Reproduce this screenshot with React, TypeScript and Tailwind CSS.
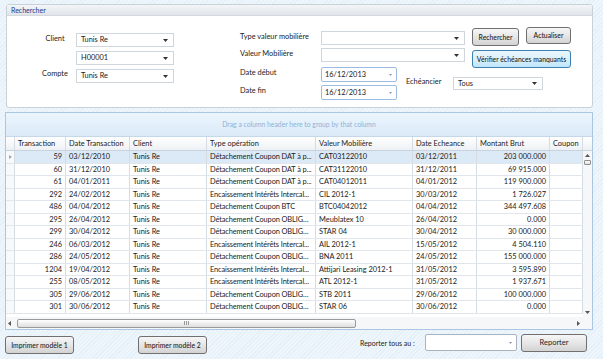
import React from 'react'

const DAT = 'Détachement Coupon DAT à p...'
const ENC = 'Encaissement Intérêts Intercal...'
const OBL = 'Détachement Coupon OBLIGA...'

const rows = [
  ['59', '03/12/2010', DAT, 'CAT03122010', '03/12/2011', '203 000.000'],
  ['60', '31/12/2010', DAT, 'CAT31122010', '31/12/2011', '69 915.000'],
  ['61', '04/01/2011', DAT, 'CAT04012011', '04/01/2012', '119 900.000'],
  ['292', '24/02/2012', ENC, 'CIL 2012-1', '30/03/2012', '1 726.027'],
  ['486', '04/04/2012', 'Détachement Coupon BTC', 'BTC04042012', '04/04/2012', '344 497.608'],
  ['295', '26/04/2012', OBL, 'Meublatex 10', '26/04/2012', '0.000'],
  ['299', '30/04/2012', OBL, 'STAR 04', '30/04/2012', '30 000.000'],
  ['246', '06/03/2012', ENC, 'AIL 2012-1', '15/05/2012', '4 504.110'],
  ['286', '24/05/2012', OBL, 'BNA 2011', '24/05/2012', '155 000.000'],
  ['1204', '19/04/2012', ENC, 'Attijari Leasing 2012-1', '31/05/2012', '3 595.890'],
  ['255', '08/05/2012', ENC, 'ATL 2012-1', '31/05/2012', '1 937.671'],
  ['305', '29/06/2012', OBL, 'STB 2011', '29/06/2012', '100 000.000'],
  ['301', '30/06/2012', OBL, 'STAR 06', '30/06/2012', '0.000'],
]

const cols = 'grid grid-cols-[9px_51px_64px_77px_109px_97px_64px_73px_33px]'

function Caret({ light }: { light?: boolean }) {
  return light ? (
    <svg width="3" height="2" viewBox="0 0 3 2">
      <path d="M0 0h3L1.5 2z" fill="#8a9aae" />
    </svg>
  ) : (
    <svg width="5" height="3" viewBox="0 0 5 3">
      <path d="M0 0h5L2.5 3z" fill="#333" />
    </svg>
  )
}

function Combo({ value, className }: { value?: string; className: string }) {
  return (
    <div className={`flex items-center justify-between bg-white border border-[#cfd6de] pl-[4px] pr-[5px] ${className}`}>
      <span>{value}</span>
      <Caret />
    </div>
  )
}

function DateBox({ value }: { value: string }) {
  return (
    <div className="flex items-center justify-between w-[76px] h-[15px] bg-white border border-[#9bbbe3] rounded-[2px] pl-[3px] pr-[4px]">
      <span>{value}</span>
      <Caret light />
    </div>
  )
}

function Button({ children, className, blue }: { children: React.ReactNode; className: string; blue?: boolean }) {
  return (
    <div
      className={`flex items-center justify-center rounded-[3px] border text-[6.8px] font-medium text-[#1e1e1e] ${
        blue
          ? 'border-[#3c7fb1] bg-gradient-to-b from-[#eaf6fd] via-[#d9f0fc] to-[#bee6fd]'
          : 'border-[#707070] bg-gradient-to-b from-[#f6f6f6] via-[#e6e6e6] to-[#d3d3d3]'
      } ${className}`}
    >
      {children}
    </div>
  )
}

export default function App() {
  return (
    <div className="w-[603px] h-[359px] overflow-hidden pt-[4px] font-[Lato,sans-serif] text-[7.4px] text-[#222] bg-[repeating-linear-gradient(135deg,#e3f0fa_0px,#e3f0fa_1px,#eef6fc_1px,#eef6fc_3px)]">
      {/* Rechercher */}
      <div className="ml-[6px] w-[587px] h-[104px] bg-white border border-[#c9d1d9] rounded-[3px] overflow-hidden">
        <div className="h-[11px] flex items-center pl-[4px] text-[7px] text-[#23398a] bg-gradient-to-b from-[#f3f5f7] to-[#e1e5ea] border-b border-[#d3d8de]">
          Rechercher
        </div>
        <div className="flex items-start">
          <div className="ml-[30px] mt-[17px] grid grid-cols-[36px_98px] gap-x-[3px] gap-y-[4px] items-center">
            <span className="text-center -mt-[2px]">Client</span>
            <Combo value="Tunis Re" className="h-[14px]" />
            <span />
            <Combo value="H00001" className="h-[14px]" />
            <span className="text-center -mt-[4px]">Compte</span>
            <Combo value="Tunis Re" className="h-[14px]" />
          </div>

          <div className="ml-[66px] mt-[11px] flex flex-col">
            <div className="flex items-start">
              <div className="mt-[4px] flex flex-col gap-[3px]">
                <div className="flex items-center">
                  <span className="w-[81px] -mt-[2px]">Type valeur mobilière</span>
                  <Combo className="w-[144px] h-[14px]" />
                </div>
                <div className="flex items-center">
                  <span className="w-[81px] -mt-[3px]">Valeur Mobilière</span>
                  <Combo className="w-[144px] h-[14px]" />
                </div>
              </div>
              <div className="ml-[7px] flex flex-col gap-[4px]">
                <div className="flex items-start gap-[7px]">
                  <Button className="w-[47px] h-[18px] mt-[1px]">Rechercher</Button>
                  <Button className="w-[45px] h-[17px]">Actualiser</Button>
                </div>
                <Button blue className="w-[99px] h-[18px]">Vérifier échéances manquants</Button>
              </div>
            </div>
            <div className="-mt-[1px] flex items-center">
              <div className="flex flex-col gap-[3px]">
                <div className="flex items-center">
                  <span className="w-[81px] -mt-[4px]">Date début</span>
                  <DateBox value="16/12/2013" />
                </div>
                <div className="flex items-center">
                  <span className="w-[81px] -mt-[3px]">Date fin</span>
                  <DateBox value="16/12/2013" />
                </div>
              </div>
              <span className="ml-[9px] w-[47px] -mt-[3px]">Echéancier</span>
              <Combo value="Tous" className="w-[90px] h-[13px]" />
            </div>
          </div>
        </div>
      </div>

      {/* Grid */}
      <div className="mt-[4px] ml-[5px] w-[588px] h-[218px] bg-white border border-[#a9c6e2] flex flex-col overflow-hidden">
        <div className="h-[24px] shrink-0 flex items-center justify-center text-[6.8px] text-[#8fb3d8] bg-gradient-to-b from-[#ebf5fd] to-[#dbeaf8] border-b border-[#c5d8ea]">
          Drag a column header here to group by that column
        </div>
        <div className="flex h-[14px] shrink-0 bg-gradient-to-b from-white to-[#eef1f4] border-b border-[#c9d3dd]">
          <div className={cols}>
            {['', 'Transaction', 'Date Transaction', 'Client', 'Type opération', 'Valeur Mobilière', 'Date Echeance', 'Montant Brut', 'Coupon'].map((h, i) => (
              <div key={i} className="leading-[13px] px-[3px] border-r border-[#d5dce4] whitespace-nowrap overflow-hidden">
                {h}
              </div>
            ))}
          </div>
        </div>
        <div className="flex h-[166px] shrink-0">
          <div className="w-[577px]">
            {rows.map((r, i) => (
              <div key={i} className={`${cols} h-[12.5px] border-b border-[#e1e6ec]`}>
                <div className="flex items-center justify-center border-r border-[#d5dce4] bg-[#f7f9fb]">
                  {i === 0 && (
                    <svg width="3" height="4" viewBox="0 0 3 4">
                      <path d="M0 0l3 2-3 2z" fill="#9aa7b5" />
                    </svg>
                  )}
                </div>
                {[r[0], r[1], 'Tunis Re', r[2], r[3], r[4], r[5], ''].map((c, j) => (
                  <div
                    key={j}
                    className={`leading-[11.5px] px-[3px] border-r border-[#d5dce4] truncate ${
                      i === 0 ? 'bg-[#dce9f7]' : ''
                    } ${j === 0 || j === 6 ? 'text-right' : ''} ${j === 3 ? 'tracking-[-0.1px]' : ''}`}
                  >
                    {c}
                  </div>
                ))}
              </div>
            ))}
          </div>
          <div className="w-[9px] flex flex-col items-center justify-between bg-[#f6f7f8] py-[3px]">
            <div className="flex flex-col items-center gap-[3px]">
              <svg width="5" height="3" viewBox="0 0 5 3">
                <path d="M2.5 0L5 3H0z" fill="#555" />
              </svg>
              <div className="w-[7px] h-[5px] rounded-[1px] border border-[#8f8f8f] bg-gradient-to-b from-white to-[#dcdcdc]" />
            </div>
            <svg width="5" height="3" viewBox="0 0 5 3">
              <path d="M0 0h5L2.5 3z" fill="#555" />
            </svg>
          </div>
        </div>
        <div className="flex h-[12px] shrink-0 items-center bg-[#f6f7f8]">
          <div className="w-[577px] flex items-center pl-[2px] pr-[3px]">
            <svg width="3" height="5" viewBox="0 0 3 5">
              <path d="M3 0v5L0 2.5z" fill="#555" />
            </svg>
            <div className="ml-[6px] w-[339px] h-[9px] rounded-[2px] border border-[#9a9a9a] bg-gradient-to-b from-white to-[#dedede] flex items-center justify-center gap-[1px]">
              <div className="w-px h-[4px] bg-[#999]" />
              <div className="w-px h-[4px] bg-[#999]" />
              <div className="w-px h-[4px] bg-[#999]" />
            </div>
            <div className="flex-1" />
            <svg width="3" height="5" viewBox="0 0 3 5">
              <path d="M0 0v5l3-2.5z" fill="#555" />
            </svg>
          </div>
        </div>
      </div>

      {/* Bottom bar */}
      <div className="mt-[4px] flex items-start">
        <Button className="ml-[5px] mt-[2px] w-[69px] h-[18px]">Imprimer modèle 1</Button>
        <Button className="ml-[64px] mt-[2px] w-[69px] h-[18px]">Imprimer modèle 2</Button>
        <span className="ml-[153px] mt-[4px] w-[65px] text-[7px]">Reporter tous au :</span>
        <div className="flex items-center justify-end w-[92px] h-[17px] bg-white border border-[#abb4be] rounded-[2px] pr-[4px]">
          <Caret light />
        </div>
        <Button className="ml-[4px] w-[66px] h-[18px] !font-normal !text-[7.5px]">Reporter</Button>
      </div>
    </div>
  )
}
